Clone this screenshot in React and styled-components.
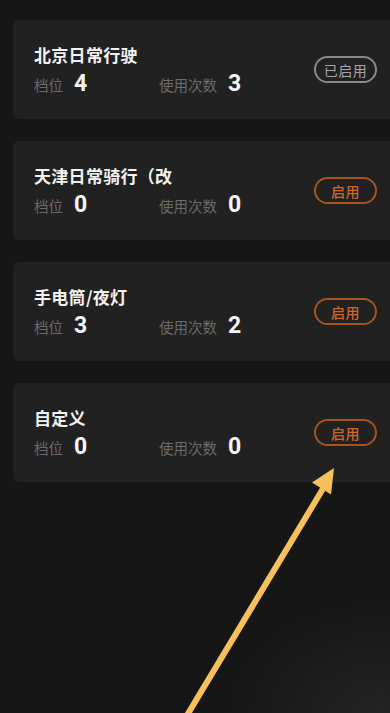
import React from 'react';
import styled, { createGlobalStyle } from 'styled-components';

const GlobalStyle = createGlobalStyle`
  html, body {
    margin: 0;
    padding: 0;
    background: #161616;
  }
  body {
    font-family: 'Noto Sans CJK SC', 'Noto Sans', sans-serif;
  }
`;

const Page = styled.div`
  position: relative;
  width: 390px;
  height: 713px;
  overflow: hidden;
  background:
    radial-gradient(ellipse 150px 110px at 380px 713px, #242424 0, rgba(36, 36, 36, 0) 100%),
    #161616;
`;

const List = styled.div`
  display: flex;
  flex-direction: column;
  gap: 22px;
  padding: 20px 0 0 13px;
`;

const Card = styled.div`
  display: flex;
  align-items: center;
  justify-content: space-between;
  height: 99px;
  margin-right: -12px;
  padding: 0 25px 0 21px;
  box-sizing: border-box;
  background: #212121;
  border-radius: 6px;
`;

const Info = styled.div`
  display: flex;
  flex-direction: column;
  gap: 3px;
  margin-top: 2px;
`;

const Title = styled.div`
  color: #f2f2f2;
  font-size: 17px;
  font-weight: 600;
  line-height: 24px;
  letter-spacing: 0.3px;
`;

const Stats = styled.div`
  display: flex;
  align-items: baseline;
`;

const Stat = styled.div`
  display: flex;
  align-items: baseline;
  gap: 11px;
  width: ${props => props.width || 'auto'};
`;

const Label = styled.span`
  color: #6b6b6b;
  font-size: 14.5px;
  line-height: 20px;
`;

const Value = styled.span`
  color: #f4f4f4;
  font-family: Roboto, 'Noto Sans', sans-serif;
  font-size: 23px;
  font-weight: 700;
  line-height: 28px;
`;

const Pill = styled.div`
  display: flex;
  align-items: center;
  justify-content: center;
  width: 63px;
  height: 27px;
  box-sizing: border-box;
  border-radius: 14px;
  border: 2px solid ${props => (props.active ? '#8a8a8a' : '#a8531f')};
  color: ${props => (props.active ? '#a6a6a6' : '#d0672c')};
  font-size: 14px;
  font-weight: ${props => (props.active ? 400 : 500)};
  letter-spacing: 0.5px;
`;

const Overlay = styled.svg`
  position: absolute;
  left: 0;
  top: 0;
  pointer-events: none;
`;

const modes = [
  { name: '北京日常行驶', gear: 4, uses: 3, active: true },
  { name: '天津日常骑行（改', gear: 0, uses: 0 },
  { name: '手电筒/夜灯', gear: 3, uses: 2 },
  { name: '自定义', gear: 0, uses: 0 },
];

const App = () => {
  return (
    <Page>
      <GlobalStyle />
      <List>
        {modes.map(mode => (
          <Card key={mode.name}>
            <Info>
              <Title>{mode.name}</Title>
              <Stats>
                <Stat width="125px">
                  <Label>档位</Label>
                  <Value>{mode.gear}</Value>
                </Stat>
                <Stat>
                  <Label>使用次数</Label>
                  <Value>{mode.uses}</Value>
                </Stat>
              </Stats>
            </Info>
            <Pill active={mode.active}>{mode.active ? '已启用' : '启用'}</Pill>
          </Card>
        ))}
      </List>
      <Overlay width="390" height="713" viewBox="0 0 390 713">
        <line
          x1="183"
          y1="722"
          x2="324"
          y2="487"
          stroke="#f6c15a"
          strokeWidth="6"
        />
        <polygon points="334,468 331,494.5 312,482.5" fill="#f6c15a" />
      </Overlay>
    </Page>
  );
};

export default App;
